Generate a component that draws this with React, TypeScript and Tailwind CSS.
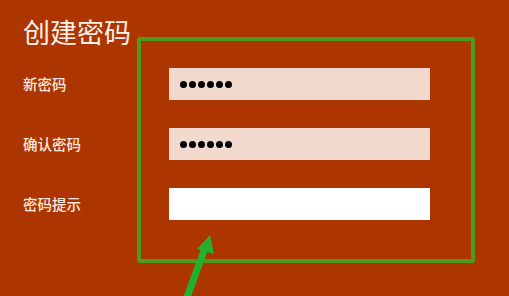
import React from "react";

function Dots() {
  return (
    <div className="flex items-center gap-[2px] pl-[11px]">
      {[0, 1, 2, 3, 4, 5].map((i) => (
        <span key={i} className="block w-[7px] h-[7px] rounded-full bg-black" />
      ))}
    </div>
  );
}

function Row({ label, filled }: { label: string; filled: boolean }) {
  return (
    <div className="flex items-center h-[32px]">
      <div className="w-[146px] text-[14.5px] font-medium text-[#fbe9df] leading-none">{label}</div>
      <div
        className={
          "w-[261px] h-[32px] flex items-center " +
          (filled ? "bg-[#f1d9cd]" : "bg-white")
        }
      >
        {filled ? <Dots /> : null}
      </div>
    </div>
  );
}

export default function App() {
  return (
    <div
      className="relative w-[509px] h-[296px] overflow-hidden bg-[#ad3500]"
      style={{ fontFamily: '"Noto Sans CJK SC", "Noto Sans", sans-serif' }}
    >
      <div className="flex flex-col pl-[23px] pt-[14px]">
        <div className="text-[27px] leading-[36px] text-[#fdf0e8] h-[36px]">创建密码</div>
        <div className="flex flex-col gap-[28px] mt-[18px]">
          <Row label="新密码" filled />
          <Row label="确认密码" filled />
          <Row label="密码提示" filled={false} />
        </div>
      </div>
      <div className="absolute left-[137px] top-[37px] w-[338px] h-[226px] border-[4px] border-[#4c9c1c] rounded-[3px]" />
      <svg className="absolute left-0 top-0" width="509" height="296" viewBox="0 0 509 296">
        <line x1="186" y1="300" x2="205" y2="248" stroke="#22b12c" strokeWidth="7" strokeLinecap="butt" />
        <polygon points="210,235 214,254 197,249" fill="#22b12c" />
      </svg>
    </div>
  );
}
